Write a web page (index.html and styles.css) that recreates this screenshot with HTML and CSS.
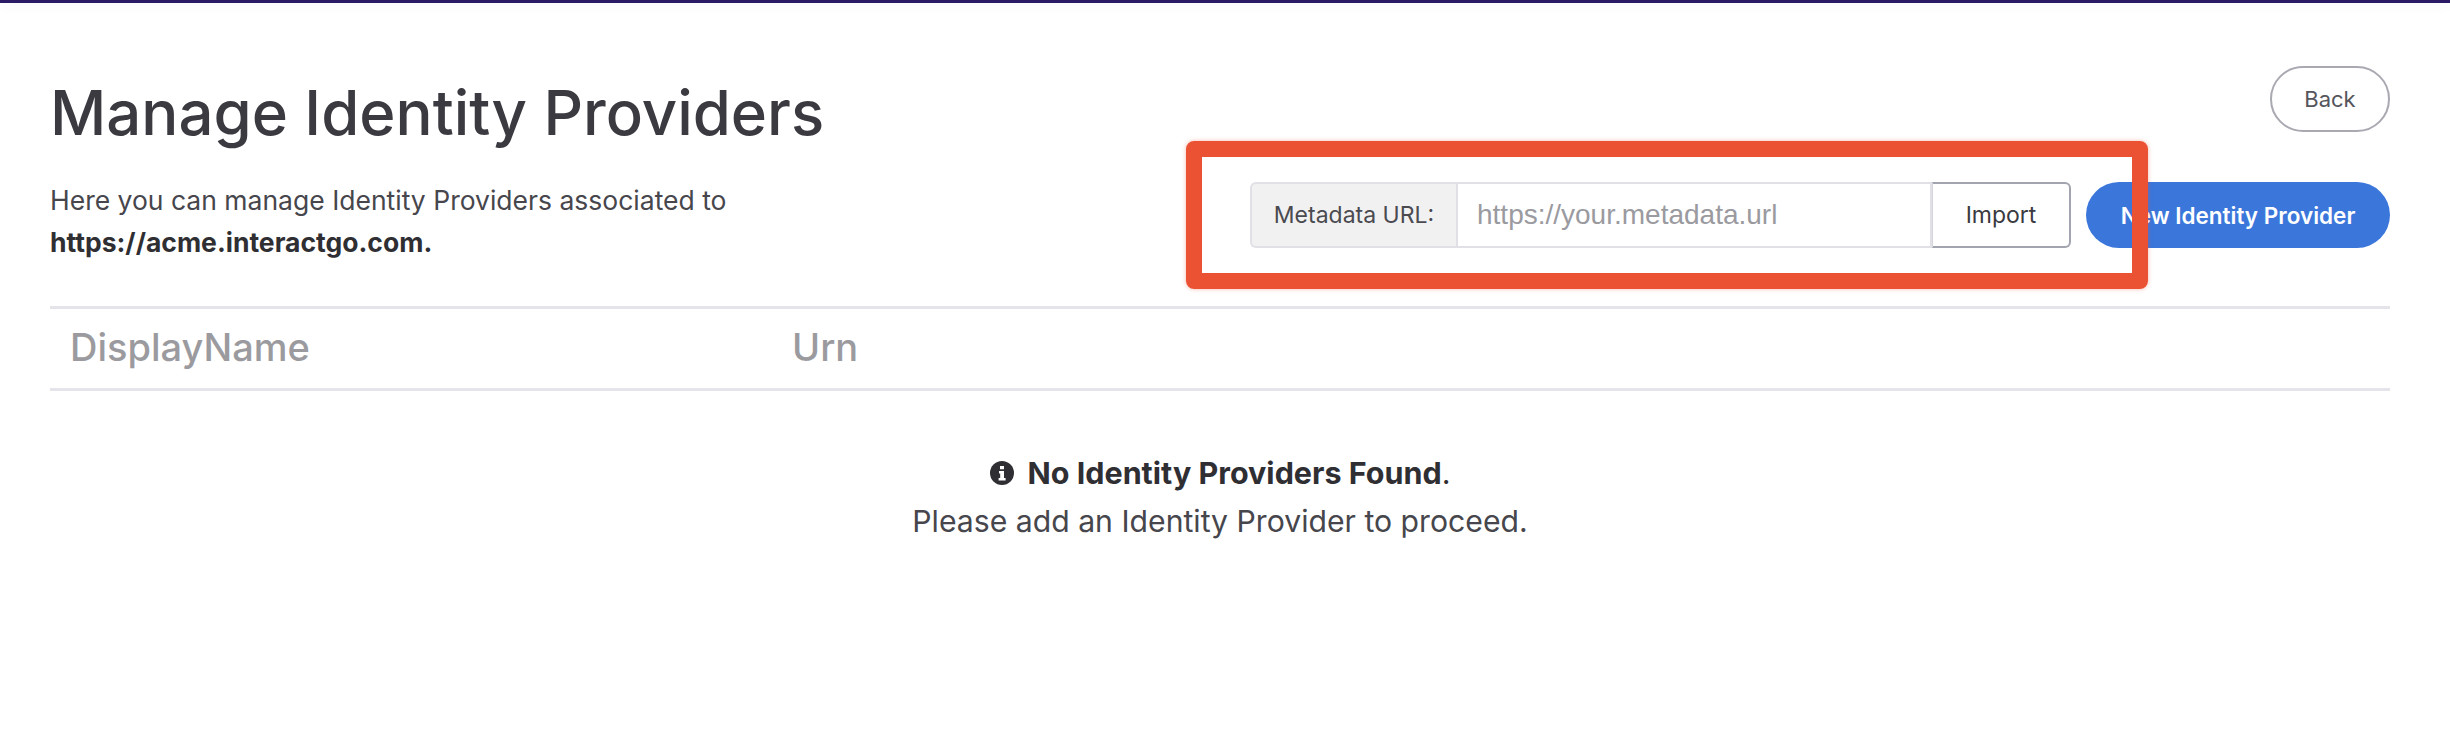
FILE: index.html
```html
<!DOCTYPE html>
<html lang="en">
<head>
    <meta charset="UTF-8">
    <title>Manage Identity Providers</title>
    <link rel="stylesheet" href="styles.css">
</head>
<body>
    <div class="top-bar"></div>

    <div class="container">
        <div class="page-head">
            <div class="head-text">
                <h1>Manage Identity Providers</h1>
                <p>Here you can manage Identity Providers associated to<br><strong>https://acme.interactgo.com.</strong></p>
            </div>
            <div class="head-actions">
                <button class="btn-back">Back</button>
                <div class="toolbar">
                    <div class="import-group">
                        <span class="import-label">Metadata URL:</span>
                        <input class="import-input" type="text" placeholder="https://your.metadata.url">
                        <button class="import-btn">Import</button>
                    </div>
                    <button class="btn-new">New Identity Provider</button>
                    <!-- Красная рамка поверх скриншота -->
                    <div class="callout"></div>
                </div>
            </div>
        </div>

        <div class="table-head">
            <div class="col-name">DisplayName</div>
            <div class="col-urn">Urn</div>
        </div>

        <div class="empty-state">
            <div class="empty-title">
                <svg class="info-icon" viewBox="0 0 24 24" aria-hidden="true">
                    <circle cx="12" cy="12" r="12" fill="#2f2f33"/>
                    <path fill="#fff" d="M10 5h4v3.2h-4zM9 10h5v7h1.6v2.4H8.6V17h1.6v-4.600H9z"/>
                </svg>
                <span><strong>No Identity Providers Found</strong>.</span>
            </div>
            <div class="empty-text">Please add an Identity Provider to proceed.</div>
        </div>
    </div>
</body>
</html>
```

FILE: styles.css
```css
body {
    font-family: Inter, "Liberation Sans", sans-serif;
    margin: 0;
    background-color: #fff;
    color: #3a3a40;
    overflow: hidden;
}

.top-bar {
    height: 3px;
    background-color: #2b1a66;
    box-shadow: 0 3px 12px rgba(0, 0, 0, 0.06);
}

.container {
    padding: 63px 60px 0 50px;
}

.page-head {
    display: flex;
    justify-content: space-between;
    height: 240px;
}

h1 {
    margin: 0;
    font-size: 61.700px;
    font-weight: 500;
    line-height: 78px;
    color: #3a3a40;
    padding-top: 8px;
}

.head-text p {
    margin: 27px 0 0;
    font-size: 26.500px;
    line-height: 42px;
    color: #46464c;
}

.head-text strong {
    font-weight: 700;
    color: #2f2f33;
}

.head-actions {
    display: flex;
    flex-direction: column;
    align-items: flex-end;
    gap: 50px;
}

.btn-back {
    width: 120px;
    height: 66px;
    padding: 0;
    font-family: inherit;
    font-size: 22px;
    color: #55555c;
    background: #fff;
    border: 2px solid #a9a9b2;
    border-radius: 33px;
}

.toolbar {
    position: relative;
    display: flex;
    gap: 15px;
}

.import-group {
    display: flex;
    width: 821px;
    height: 66px;
}

.import-label {
    display: flex;
    align-items: center;
    justify-content: center;
    box-sizing: border-box;
    width: 206px;
    font-size: 23px;
    color: #4a4a50;
    background-color: #f1f1f2;
    border: 2px solid #e0e0e6;
    border-right: none;
    border-radius: 6px 0 0 6px;
}

.import-input {
    box-sizing: border-box;
    width: 476px;
    padding: 0 19px;
    font-family: "Liberation Sans", Arial, sans-serif;
    font-size: 28px;
    background: #fff;
    border: 2px solid #e0e0e6;
    border-radius: 0;
    outline: none;
}

.import-input::placeholder {
    color: #9a9a9f;
    opacity: 1;
}

.import-btn {
    box-sizing: border-box;
    width: 139px;
    padding: 0;
    font-family: inherit;
    font-size: 23px;
    color: #3a3a40;
    background: #fff;
    border: 2px solid #a2a5b0;
    border-left: 1px solid #d5d5db;
    border-radius: 0 6px 6px 0;
}

.btn-new {
    width: 304px;
    height: 66px;
    padding: 0;
    font-family: inherit;
    font-size: 22.500px;
    font-weight: 600;
    color: #fff;
    background-color: #3b76db;
    border: none;
    border-radius: 33px;
}

.callout {
    position: absolute;
    left: -64px;
    top: -41px;
    width: 962px;
    height: 148px;
    box-sizing: border-box;
    border: 16px solid #ea5233;
    border-radius: 8px;
    box-shadow: 0 0 4px rgba(234, 82, 51, 0.4);
}

.table-head {
    display: flex;
    align-items: center;
    box-sizing: border-box;
    height: 85px;
    padding-bottom: 4px;
    border-top: 3px solid #e4e4ea;
    border-bottom: 3px solid #e4e4ea;
    font-size: 38px;
    font-weight: 500;
    color: #9b9b9f;
}

.col-name {
    width: 722px;
    padding-left: 20px;
}

.empty-state {
    margin-top: 58px;
    text-align: center;
    font-size: 30.200px;
    line-height: 48px;
    color: #46464c;
}

.empty-title {
    display: flex;
    align-items: center;
    justify-content: center;
    gap: 14px;
    font-size: 30.500px;
    color: #2f2f33;
}

.empty-title strong {
    font-weight: 700;
}

.info-icon {
    width: 24px;
    height: 24px;
}
```
